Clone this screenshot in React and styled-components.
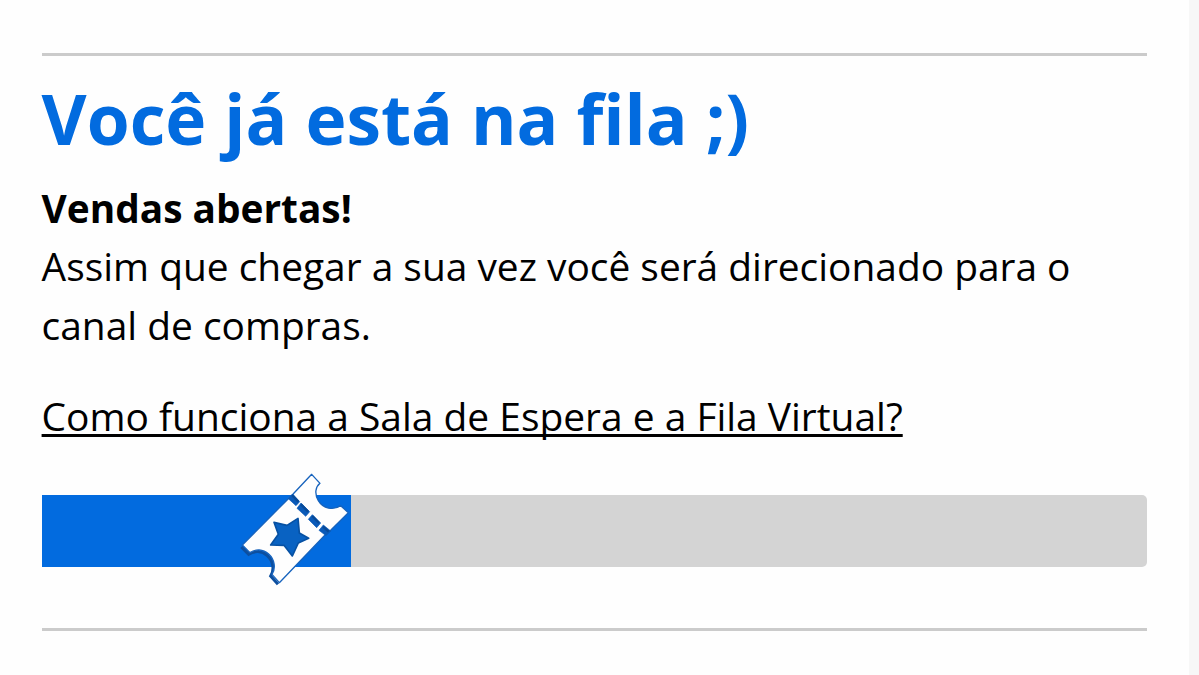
import React from "react";
import styled, { createGlobalStyle } from "styled-components";

const GlobalStyle = createGlobalStyle`
  * { box-sizing: border-box; }
  body { margin: 0; background: #f7f7f7; overflow: hidden; }
`;

const Page = styled.main`
  width: 1189px;
  height: 675px;
  padding: 53px 42px 0 41.6px;
  background: #fefefe;
  color: #000;
  font-family: "Open Sans", "Noto Sans", sans-serif;
  font-size: 38.88px;
  line-height: 58.5px;
`;

const Divider = styled.hr`
  height: 3px;
  margin: 0;
  border: 0;
  background: #cbcbcb;
`;

const Title = styled.h1`
  margin: 17px 0 15.6px;
  color: #026bdf;
  font-size: 69.4px;
  font-weight: 700;
  line-height: 90px;
  white-space: nowrap;
`;

const Message = styled.p`
  margin: 0 0 32.9px;
`;

const Lead = styled.strong`
  font-size: 38.8px;
`;

const HelpLink = styled.a`
  display: block;
  width: fit-content;
  color: inherit;
  font-size: 38.92px;
  text-decoration: underline;
  text-decoration-thickness: 3px;
  text-underline-offset: 3px;
  text-decoration-skip-ink: none;
`;

const Track = styled.div`
  height: 72px;
  margin: 49.5px 0 61px;
  border-radius: 5px;
  background: #d4d4d4;
`;

const Fill = styled.div`
  position: relative;
  width: 309px;
  height: 100%;
  background: #026bdf;
`;

const Ticket = styled.svg`
  position: absolute;
  right: -9px;
  top: -30px;
  width: 130px;
  height: 130px;
`;

const OUTLINE =
  "M245 28 L270 55 C256 66 253 86 265 107 C279 131 310 137 332 122 L355 143 L302 196 L283 212 L148 353 L126 328 C138 310 134 283 116 267 C99 252 77 251 60 263 L37 240 L175 101 L190 86 Z";
const STAR = "M204 160 L208 204 L236 220 L205 234 L187 273 L162 241 L122 240 L145 208 L132 172 L171 181 Z";
const DASHES = [
  "M188 87 L209 110 L198 122 L175 101 Z",
  "M213 114 L239 140 L227 154 L201 130 Z",
  "M247 149 L272 174 L260 188 L235 163 Z",
  "M280 180 L302 198 L288 212 L267 196 Z",
];
const DASH_EDGES = [
  "M186 90 L205 110",
  "M213 118 L234 140",
  "M247 153 L267 174",
  "M279 185 L296 200",
];

function TicketIcon() {
  return (
    <Ticket viewBox="0 0 390 390" aria-hidden="true">
      <path
        d="M38 241 L60 263 C77 251 99 252 116 267 C134 283 138 310 126 328 L148 353"
        fill="none"
        stroke="#0d4f9f"
        strokeWidth="9"
        transform="translate(-4 5)"
      />
      <path d={OUTLINE} fill="#fefefe" stroke="#1763bd" strokeWidth="4" strokeLinejoin="round" />
      {DASHES.map((dash) => (
        <path key={dash} d={dash} fill="#0a5ab8" stroke="#0a5ab8" strokeWidth="2" />
      ))}
      {DASH_EDGES.map((edge) => (
        <path key={edge} d={edge} stroke="#084a98" strokeWidth="7" />
      ))}
      <path d={STAR} fill="#0962c2" stroke="#0751a3" strokeWidth="5" strokeLinejoin="round" />
    </Ticket>
  );
}

export default function App() {
  return (
    <>
      <GlobalStyle />
      <Page>
        <Divider />
        <Title>Você já está na fila ;)</Title>
        <Message>
          <Lead>Vendas abertas!</Lead>
          <br />
          Assim que chegar a sua vez você será direcionado para o canal de compras.
        </Message>
        <HelpLink href="#">Como funciona a Sala de Espera e a Fila Virtual?</HelpLink>
        <Track>
          <Fill>
            <TicketIcon />
          </Fill>
        </Track>
        <Divider />
      </Page>
    </>
  );
}
